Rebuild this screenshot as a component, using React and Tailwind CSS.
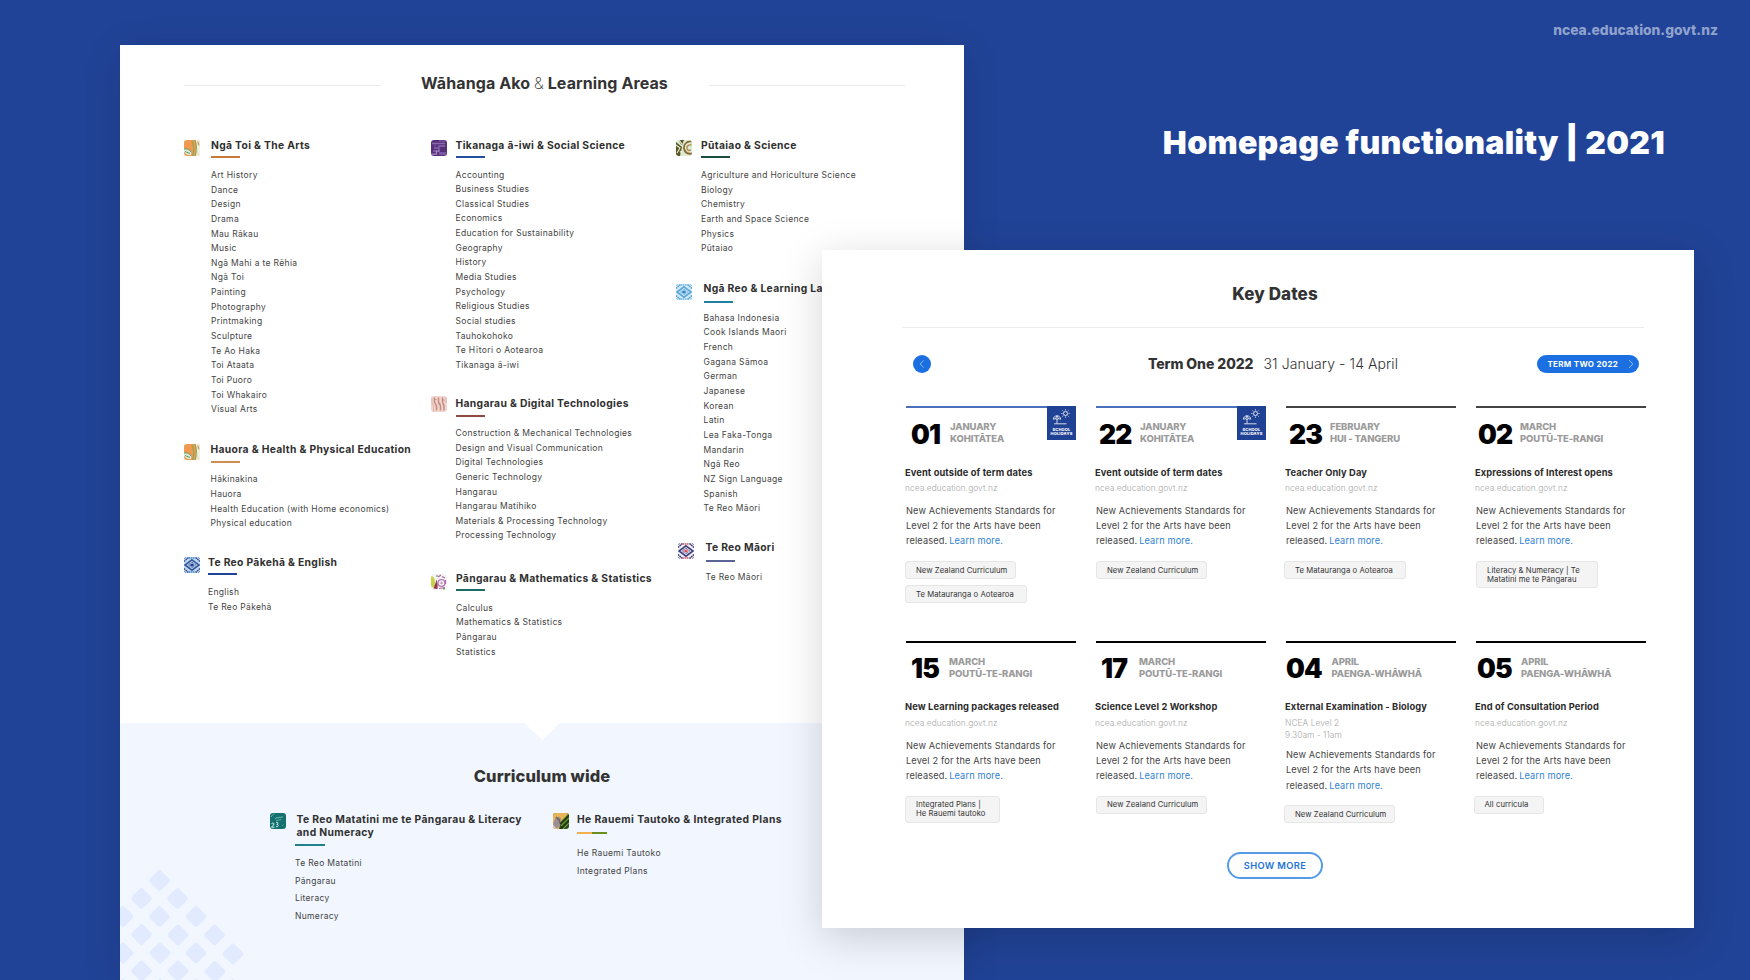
import React from "react";

/* ---------- Pattern tiles ---------- */

function Tile({ bg, children, className = "" }) {
  return (
    <svg viewBox="0 0 16 16" className={`size-4 shrink-0 overflow-hidden rounded-[3px] ${className}`}>
      <rect width="16" height="16" fill={bg} />
      {children}
    </svg>
  );
}

const ArtsTile = (p) => (
  <Tile bg="#f09a50" {...p}>
    <path d="M11.500 0H16v16h-4.500c2-5 2-10 0-16z" fill="#eef1e2" />
    <path d="M7.500 0c3 5 3 11 1 16h2.500c2-5 2-11 0-16z" fill="#e0a050" />
    <path d="M8 1c2 4 2.200 10 .6 15M11 0c1.800 5 1.800 11 .2 16" fill="none" stroke="#7fa05a" strokeWidth=".9" />
    <path d="M0 9c3-.6 6 .6 7.500 3.500L7 15c-3 .6-5-1-7-3z" fill="#dfeadb" />
    <path d="M0 9c3-.6 6 .6 7.500 3.500M1 11.500l5 2" fill="none" stroke="#5f9a74" strokeWidth="1" />
    <path d="M13.500 1c1.500 1 2 3 1.800 5-1.500-1-2-3-1.800-5z" fill="#d08d52" />
    <path d="M13.200 9v6" stroke="#d6dfc0" strokeWidth="1" />
  </Tile>
);

const SocialTile = (p) => (
  <Tile bg="#54307a" {...p}>
    <path d="M1 3.500h13M3 8h5V6h6M2 11h4" stroke="#8a68ad" strokeWidth="1.300" fill="none" />
    <path d="M0 14.200h5.500v-3H8v-2" stroke="#a58ac2" strokeWidth="1.300" fill="none" />
    <path d="M8 1h6M3 5.500h2" stroke="#7650a0" strokeWidth="1.500" />
    <path d="M8 12h7v3H8z" fill="#7a57a3" />
  </Tile>
);

const TechTile = (p) => (
  <Tile bg="#efd6d0" {...p}>
    <path d="M3.500 1.500v4.500l2 4v4.500M7.500 1.500V6l2 4v4.500M11.500 1.500V6l1.500 4v4.500" stroke="#c88b7e" strokeWidth="1.500" fill="none" />
    <path d="M3 3.500h2.500M7 8h2.500M11 4h2.500M5 12h1.500" stroke="#c88b7e" strokeWidth="1.200" />
    <path d="M1 1v6l1.500 3v6M15 1v6" stroke="#e0b3a8" strokeWidth="1" fill="none" />
  </Tile>
);

const MathsTile = (p) => (
  <Tile bg="#f6f1f4" {...p}>
    <path d="M1 2c3 2 4 6 2 12L0 12V3z" fill="#c9d146" />
    <path d="M2.500 14.500c1-3 2.500-6 3-9 1 3 1.500 6 1 9.500z" fill="#8d3a4a" />
    <circle cx="10.500" cy="9" r="3.400" fill="none" stroke="#b77cb5" strokeWidth="1.300" />
    <circle cx="10.500" cy="9" r="1.200" fill="#c593c4" />
    <path d="M7 3l3-2M11 2.500l3 1.500M14.500 6v4M8 14.500l6-1" stroke="#a86aa0" strokeWidth="1.200" />
    <path d="M5 2h2M12 14.800h2" stroke="#6b8a4a" strokeWidth="1.200" />
  </Tile>
);

const ScienceTile = (p) => (
  <Tile bg="#dcebd6" {...p}>
    <path d="M0 2l6 5-2 9H0zM3 0h5l-2 5-2-2z" fill="#5a5526" />
    <path d="M0 5l4 3-3 5M3 0l3 4M4 11l3 5" fill="none" stroke="#e2e6c4" strokeWidth="1.200" />
    <path d="M15.500 1.500C10 1 7.500 5 8 8.500c.5 4 4 6 8 5" fill="none" stroke="#8a6d34" strokeWidth="1.800" />
    <path d="M15.500 5c-3-.6-5 1-4.500 3.500.5 2.200 3 2.600 4 1.200" fill="none" stroke="#b58a48" strokeWidth="1.400" />
  </Tile>
);

function WeaveTile({ bg, a, b, c, className }) {
  return (
    <Tile bg={bg} className={className}>
      <path d="M8 2.800l7 5.200-7 5.200L1 8z" fill="none" stroke={a} strokeWidth="1.600" />
      <path d="M8 5.200l3.800 2.800L8 10.800 4.200 8z" fill="none" stroke={a} strokeWidth=".9" strokeDasharray="1.200 .5" />
      <path d="M8 6.200L10.400 8 8 9.800 5.600 8z" fill={b} />
      <path d="M0 4.500L5 0M16 4.500L11 0M0 11.500L5 16M16 11.500L11 16" stroke={a} strokeWidth="1.600" strokeDasharray="1.600 .6" />
      <path d="M0 1.500L1.500 0M16 1.500L14.500 0M0 14.500L1.500 16M16 14.500L14.500 16" stroke={a} strokeWidth="1.500" />
      <path d="M5 1h6M5 15h6" stroke={c} strokeWidth="1.600" strokeDasharray="1.400 .6" />
    </Tile>
  );
}

const LanguagesTile = (p) => <WeaveTile bg="#d3e9f8" a="#5aa6d6" b="#2f83c2" c="#7dbbe2" {...p} />;
const EnglishTile = (p) => <WeaveTile bg="#c8daef" a="#34579f" b="#1f3f8a" c="#3f8fca" {...p} />;
const MaoriTile = (p) => <WeaveTile bg="#f3f0f5" a="#3d3f7c" b="#d9535c" c="#e0525a" {...p} />;

const LiteracyTile = (p) => (
  <Tile bg="#14716f" {...p}>
    <path d="M1 4c2-3 3-3 3.500-3M5 5.500c3-1.200 5-1 8-1.500M6 8c2-1 3-1.200 5-1.200" stroke="#7fc0b8" strokeWidth=".9" fill="none" />
    <path d="M1.500 10.500c2-1 3 0 2 1.500l-2 2.200h3M6 9.500c2.500-.6 2.500 1.400.8 1.800 2 0 2 2.500-.8 2.500" stroke="#d7efec" strokeWidth="1" fill="none" />
    <path d="M12 13l1.500-1.500" stroke="#4a9c96" strokeWidth="1" />
  </Tile>
);

const PlansTile = (p) => (
  <Tile bg="#2f4a1c" {...p}>
    <path d="M0 0h16L8 9 6 16H0z" fill="#e7b556" />
    <path d="M2 6c2-3 5-3 6 0l-1 7-4 3-3-5z" fill="#9b8f93" />
    <path d="M3 4l3 3M6 6l1 4" stroke="#6f5f60" strokeWidth="1.200" />
    <path d="M0 12l4 4H0z" fill="#e9c2d0" />
    <path d="M8 9l8-8M8 13l8-8M10 16l6-6" stroke="#6f9a2c" strokeWidth="1.200" />
    <path d="M7 11l9-9M8 15.500l8-8" stroke="#1f3512" strokeWidth="1.300" />
  </Tile>
);

/* ---------- Learning areas ---------- */

function Area({ tile, tileGap = "mt-[3px]", indent = "ml-[11px]", title, bar, barGap = "mt-[3px]", listGap = "mt-[9.500px]", items, className = "" }) {
  const Icon = tile;
  return (
    <section className={`flex items-start ${className}`}>
      <Icon className={tileGap} />
      <div className={indent}>
        <h3 className="whitespace-nowrap text-[10.3px] font-bold leading-4 tracking-[0.032em] text-[#303030]">{title}</h3>
        <div className={`h-[2px] w-[29px] ${bar} ${barGap}`} />
        <ul className={`whitespace-nowrap text-[8.5px] leading-[14.64px] tracking-[0.039em] text-[#444] ${listGap}`}>
          {items.map((item) => (
            <li key={item}>{item}</li>
          ))}
        </ul>
      </div>
    </section>
  );
}

function LearningAreas() {
  return (
    <div className="h-[678px] shrink-0 pl-16 pr-[59px] pt-7">
      <div className="flex items-center justify-between">
        <div className="mt-1 h-px w-[196px] bg-[#e9e9e9]" />
        <h2 className="whitespace-nowrap text-[16px] font-bold leading-5 tracking-[0.006em] text-[#333]">
          Wāhanga Ako <span className="font-extralight">&amp;</span> Learning Areas
        </h2>
        <div className="mt-1 h-px w-[196px] bg-[#e9e9e9]" />
      </div>

      <div className="mt-[44px] flex">
        <div className="w-[247px] shrink-0">
          <Area
            tile={ArtsTile}
            title="Ngā Toi & The Arts"
            bar="bg-[#c67a35]"
            listGap="mt-[10px]"
            items={["Art History", "Dance", "Design", "Drama", "Mau Rākau", "Music", "Ngā Mahi a te Rēhia", "Ngā Toi", "Painting", "Photography", "Printmaking", "Sculpture", "Te Ao Haka", "Toi Ataata", "Toi Puoro", "Toi Whakairo", "Visual Arts"]}
          />
          <Area
            className="mt-[24.500px]"
            tile={ArtsTile}
            indent="ml-[10.500px]"
            title="Hauora & Health & Physical Education"
            bar="bg-[#cf8f52]"
            barGap="mt-[3.500px]"
            items={["Hākinakina", "Hauora", "Health Education (with Home economics)", "Physical education"]}
          />
          <Area
            className="mt-[23px]"
            tile={EnglishTile}
            indent="ml-2"
            title="Te Reo Pākehā & English"
            bar="bg-[#1f4396]"
            barGap="mt-[3.500px]"
            listGap="mt-[10px]"
            items={["English", "Te Reo Pākehā"]}
          />
        </div>

        <div className="w-[245px] shrink-0">
          <Area
            tile={SocialTile}
            indent="ml-[8.500px]"
            title="Tikanaga ā-iwi & Social Science"
            bar="bg-[#2350a0]"
            items={["Accounting", "Business Studies", "Classical Studies", "Economics", "Education for Sustainability", "Geography", "History", "Media Studies", "Psychology", "Religious Studies", "Social studies", "Tauhokohoko", "Te Hītori o Aotearoa", "Tikanaga ā-iwi"]}
          />
          <Area
            className="mt-[22.500px]"
            tile={TechTile}
            tileGap="mt-[1.500px]"
            indent="ml-[8.500px]"
            title="Hangarau & Digital Technologies"
            bar="bg-[#8f4a41]"
            barGap="mt-[4.500px]"
            listGap="mt-[8.500px]"
            items={["Construction & Mechanical Technologies", "Design and Visual Communication", "Digital Technologies", "Generic Technology", "Hangarau", "Hangarau Matihiko", "Materials & Processing Technology", "Processing Technology"]}
          />
          <Area
            className="mt-[27px]"
            tile={MathsTile}
            tileGap="mt-[4px]"
            indent="ml-[9px]"
            title="Pāngarau & Mathematics & Statistics"
            bar="bg-[#1a6a66]"
            items={["Calculus", "Mathematics & Statistics", "Pāngarau", "Statistics"]}
          />
        </div>

        <div>
          <Area
            tile={ScienceTile}
            indent="ml-[9px]"
            title="Pūtaiao & Science"
            bar="bg-[#1d4d3f]"
            listGap="mt-[10px]"
            items={["Agriculture and Horiculture Science", "Biology", "Chemistry", "Earth and Space Science", "Physics", "Pūtaiao"]}
          />
          <Area
            className="mt-[24px]"
            tile={LanguagesTile}
            tileGap="mt-[4px]"
            indent="ml-[11.500px]"
            title="Ngā Reo & Learning Languages"
            bar="bg-[#1f7fa3]"
            barGap="mt-[5px]"
            listGap="mt-[8px]"
            items={["Bahasa Indonesia", "Cook Islands Maori", "French", "Gagana Sāmoa", "German", "Japanese", "Korean", "Latin", "Lea Faka-Tonga", "Mandarin", "Ngā Reo", "NZ Sign Language", "Spanish", "Te Reo Māori"]}
          />
          <Area
            className="mt-[23px] pl-[2px]"
            tile={MaoriTile}
            tileGap="mt-[4px]"
            indent="ml-[11.500px]"
            title="Te Reo Māori"
            bar="bg-[#5b6496]"
            barGap="mt-[5px]"
            listGap="mt-[8.500px]"
            items={["Te Reo Māori"]}
          />
        </div>
      </div>
    </div>
  );
}

/* ---------- Curriculum wide ---------- */

const DIAMONDS = [
  [39.500, 15.500], [21.500, 33.500], [57.500, 33.500], [3, 51.500], [39.500, 51.500], [76, 51.500],
  [21.500, 69.500], [58, 70], [94.500, 70], [3, 88], [40, 88], [76, 88], [113, 89],
  [21.500, 106], [58, 106], [95, 106.500], [3, 124.500], [40, 124.500], [76, 124.500], [113, 124.500],
];

function CurriculumWide() {
  return (
    <div className="relative flex-1 overflow-hidden bg-[#f1f6ff] pt-[42px]">
      <svg viewBox="0 0 36 17" className="absolute left-[404px] top-0 h-[17px] w-9">
        <path d="M0 0h36L18.500 17z" fill="#fff" />
      </svg>
      <svg viewBox="0 0 130 115" className="absolute bottom-0 left-0 h-[115px] w-[130px]">
        {DIAMONDS.map(([x, y]) => (
          <rect key={`${x}-${y}`} x={x - 8} y={y - 8} width="16" height="16" rx="2.500" transform={`rotate(45 ${x} ${y})`} fill="#e1eaff" />
        ))}
      </svg>

      <h2 className="text-center text-[16.500px] font-extrabold leading-[22px] tracking-[0.006em] text-[#333]">
        Curriculum wide
      </h2>

      <div className="mt-[25px] flex items-start pl-[150px]">
        <div className="flex w-[283px] shrink-0 items-start">
          <LiteracyTile className="mt-px" />
          <div className="ml-[9px]">
            <h3 className="whitespace-nowrap pl-[1.500px] pt-[0.500px] text-[10.300px] font-bold leading-[13px] tracking-[0.036em] text-[#303030]">
              Te Reo Matatini me te Pāngarau &amp; Literacy
              <br />
              and Numeracy
            </h3>
            <div className="mt-[5.500px] h-[2px] w-[30px] bg-[#23808c]" />
            <ul className="mt-[9px] text-[8.500px] leading-[17.550px] tracking-[0.039em] text-[#444]">
              <li>Te Reo Matatini</li>
              <li>Pāngarau</li>
              <li>Literacy</li>
              <li>Numeracy</li>
            </ul>
          </div>
        </div>
        <div className="flex items-start">
          <PlansTile className="mt-px" />
          <div className="ml-2">
            <h3 className="whitespace-nowrap pt-[0.500px] text-[10.300px] font-bold leading-[13px] tracking-[0.039em] text-[#303030]">
              He Rauemi Tautoko &amp; Integrated Plans
            </h3>
            <div className="mt-[6px] flex h-[2px] w-[30px]">
              <div className="flex-1 bg-[#f3ad4b]" />
              <div className="flex-1 bg-[#6a8f1d]" />
            </div>
            <ul className="mt-[11.500px] text-[8.500px] leading-[17.550px] tracking-[0.042em] text-[#444]">
              <li>He Rauemi Tautoko</li>
              <li>Integrated Plans</li>
            </ul>
          </div>
        </div>
      </div>
    </div>
  );
}

/* ---------- Key dates ---------- */

function HolidayBadge() {
  return (
    <div className="absolute right-0 top-0 flex h-[34px] w-[29px] flex-col items-center bg-[#204295] text-white">
      <svg viewBox="0 0 29 21" className="h-[21px] w-[29px]" fill="none" stroke="#fff" strokeWidth=".8">
        <circle cx="18.500" cy="7.500" r="2" />
        <path d="M18.500 3.300v1.200M18.500 10.500v1.200M14.300 7.500h1.200M21.500 7.500h1.200M15.500 4.500l.9.900M20.600 9.600l.9.900M21.500 4.500l-.9.900M16.400 9.600l-.9.900" />
        <path d="M6.300 13.200c.2-2.200 1.800-3.400 3.700-3.400s3.500 1.200 3.700 3.400l-2.300-.5-1.400.5-1.400-.5zM8.600 12.600L10 9.800l1.400 2.800M10 13v4.500M7 17.800h12.500" />
      </svg>
      <div className="mt-[1px] text-center text-[4px] font-extrabold leading-[4.300px] tracking-[0.045em]">
        SCHOOL
        <br />
        HOLIDAYS
      </div>
    </div>
  );
}

const EVENTS = [
  { day: "01", dayBox: "w-[44px] pl-[5px]", month: ["JANUARY", "KOHITĀTEA"], title: "Event outside of term dates", holiday: true, line: "bg-[#4a70bb]", tags: ["New Zealand Curriculum", "Te Matauranga o Aotearoa"], tagBoxes: ["w-[111px]", "w-[122px]"], tagsPos: "-ml-px" },
  { day: "22", dayBox: "w-[44px] pl-[3px]", month: ["JANUARY", "KOHITĀTEA"], title: "Event outside of term dates", holiday: true, line: "bg-[#4a70bb]", tags: ["New Zealand Curriculum"], tagBoxes: ["w-[111px]"], tagsPos: "" },
  { day: "23", dayBox: "w-[44px] pl-[3px]", month: ["FEBRUARY", "HUI - TANGERU"], title: "Teacher Only Day", line: "bg-[#444]", tags: ["Te Matauranga o Aotearoa"], tagBoxes: ["w-[122px]"], tagsPos: "-ml-[2px]" },
  { day: "02", dayBox: "w-[44px] pl-[2px]", month: ["MARCH", "POUTŪ-TE-RANGI"], title: "Expressions of Interest opens", line: "bg-[#444]", tags: ["Literacy & Numeracy | Te\nMatatini me te Pāngarau"], tagBoxes: ["w-[122px]"], tagsPos: "" },
  { day: "15", dayBox: "w-[43px] pl-[5px]", month: ["MARCH", "POUTŪ-TE-RANGI"], title: "New Learning packages released", line: "bg-black", tags: ["Integrated Plans |\nHe Rauemi tautoko"], tagBoxes: ["w-[95px]"], tagsPos: "-ml-px" },
  { day: "17", dayBox: "w-[43px] pl-[5px]", month: ["MARCH", "POUTŪ-TE-RANGI"], title: "Science Level 2 Workshop", line: "bg-black", tags: ["New Zealand Curriculum"], tagBoxes: ["w-[111px]"], tagsPos: "" },
  { day: "04", dayBox: "w-[45.500px]", month: ["APRIL", "PAENGA-WHĀWHĀ"], title: "External Examination - Biology", line: "bg-black", sub: "NCEA Level 2\n9.30am - 11am", bodyGap: "mt-[6.500px]", tags: ["New Zealand Curriculum"], tagBoxes: ["w-[111px]"], tagsPos: "-ml-[2px]" },
  { day: "05", dayBox: "w-[45px] pl-[1px]", month: ["APRIL", "PAENGA-WHĀWHĀ"], title: "End of Consultation Period", line: "bg-black", tags: ["All curricula"], tagBoxes: ["w-[70px]"], tagsPos: "-ml-[2.500px]" },
];

function EventCard({ day, dayBox, month, title, sub = "ncea.education.govt.nz", bodyGap = "mt-[9px]", holiday, line, tags, tagBoxes, tagsPos }) {
  return (
    <article className="relative">
      <div className={`h-[2px] ${line}`} />
      {holiday && <HolidayBadge />}
      <div className="flex pt-[10.500px]">
        <div className={`shrink-0 whitespace-nowrap text-[26.500px] font-black leading-[30px] tracking-[-0.030em] text-black ${dayBox}`}>{day}</div>
        <div className="-mb-px pt-[2.500px] text-[9.500px] font-extrabold leading-[12.200px] tracking-[-0.014em] text-[#9b9b9b]">
          {month[0]}
          <br />
          {month[1]}
        </div>
      </div>
      <h3 className="-ml-px mt-[17px] whitespace-nowrap text-[9.300px] font-bold leading-[14px] tracking-[0.012em] text-[#2b2b2b]">{title}</h3>
      <p className="-ml-px mt-[2.500px] whitespace-pre-line text-[8.400px] font-light leading-3 tracking-[0.006em] text-[#a8a8a8]">{sub}</p>
      <p className={`whitespace-nowrap text-[9.200px] leading-[15.200px] tracking-[0.017em] text-[#444] ${bodyGap}`}>
        New Achievements Standards for
        <br />
        Level 2 for the Arts have been
        <br />
        released. <a className="-ml-px text-[#2f7fd6]">Learn more.</a>
      </p>
      <div className={`mt-[12.500px] flex flex-col items-start gap-[6px] ${tagsPos}`}>
        {tags.map((tag, i) => (
          <div key={tag} className={`whitespace-pre rounded-[3px] border border-[#e6e6e6] bg-[#f4f4f4] py-[3.500px] pl-[10px] text-[7.700px] leading-[9px] tracking-[0.008em] text-[#333] ${tagBoxes[i]}`}>
            {tag}
          </div>
        ))}
      </div>
    </article>
  );
}

function KeyDates() {
  return (
    <div className="absolute left-[822px] top-[250px] h-[678px] w-[872px] bg-white pl-[80px] pt-[34px] shadow-[0_10px_40px_rgba(0,0,0,0.17)]">
      <h2 className="w-[746px] text-center text-[17px] font-extrabold leading-5 tracking-[0.006em] text-[#333]">Key Dates</h2>
      <div className="mt-[23px] h-px w-[742px] bg-[#ececec]" />

      <div className="mt-[27px] flex h-[18px] w-[737px] items-center justify-between pl-[11px]">
        <button className="flex size-[18px] items-center justify-center rounded-full bg-[#1b6fe0]">
          <svg viewBox="0 0 6 8" className="h-2 w-[6px]" fill="none" stroke="#a9cbf7" strokeWidth=".8">
            <path d="M4.500.5L1.200 4l3.300 3.500" />
          </svg>
        </button>
        <div className="ml-[78px] flex items-baseline gap-[10px] whitespace-nowrap text-[14px] leading-[18px] text-[#333]">
          <span className="font-extrabold tracking-[-0.005em]">Term One 2022</span>
          <span className="font-light tracking-[0.006em]">31 January - 14 April</span>
        </div>
        <button className="flex h-[18px] w-[102px] items-center justify-between rounded-full bg-[#1b6fe0] pl-[10.500px] pr-[5px] text-[8px] font-bold tracking-[0.037em] text-white">
          TERM TWO 2022
          <svg viewBox="0 0 6 10" className="h-[10px] w-[6px]" fill="none" stroke="#a9cbf7" strokeWidth=".8">
            <path d="M1 1l3.800 4L1 9" />
          </svg>
        </button>
      </div>

      <div className="ml-[4px] mt-[33px] grid auto-rows-[234.600px] grid-cols-[repeat(4,170px)] gap-x-5">
        {EVENTS.map((e) => (
          <EventCard key={e.day} {...e} />
        ))}
      </div>

      <div className="-mt-[23px] flex w-[746px] justify-center">
        <button className="h-[27px] w-[96px] whitespace-nowrap rounded-full border-2 border-[#559ae8] text-[9.300px] font-semibold tracking-[0.039em] text-[#2273d8]">SHOW MORE</button>
      </div>
    </div>
  );
}

export default function App() {
  return (
    <div className="relative h-[980px] w-[1750px] overflow-hidden bg-[#214397] font-['Inter',sans-serif]">
      <header className="flex flex-col items-end">
        <div className="mr-[32px] mt-5 text-[13.800px] font-extrabold leading-5 text-[#8fa2cd]">ncea.education.govt.nz</div>
        <h1 className="mr-[85px] mt-[83px] whitespace-nowrap text-[32px] font-black leading-10 tracking-[0.009em] text-white">
          Homepage functionality | 2021
        </h1>
      </header>

      <div className="absolute left-[120px] top-[45px] flex h-[935px] w-[844px] flex-col bg-white shadow-[0_6px_36px_rgba(0,0,0,0.12)]">
        <LearningAreas />
        <CurriculumWide />
      </div>

      <KeyDates />
    </div>
  );
}
